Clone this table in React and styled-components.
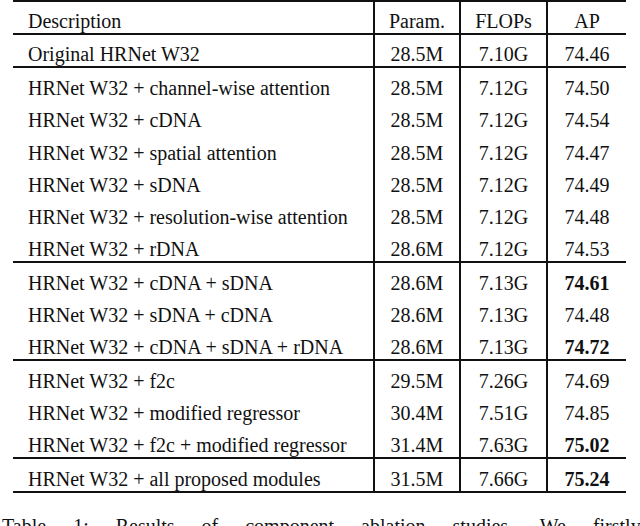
import React from "react";
import styled, { createGlobalStyle } from "styled-components";

const Global = createGlobalStyle`
  html, body { margin: 0; padding: 0; background: #fff; }
  body { font-family: "Liberation Serif", "Times New Roman", serif; color: #111; overflow: hidden; }
`;

const Page = styled.div`
  width: 640px;
  height: 526px;
  overflow: hidden;
  display: flex;
  flex-direction: column;
`;

const Table = styled.div`
  margin-left: 13px;
  width: 613px;
  border-top: 2px solid #111;
  border-bottom: 2px solid #111;
`;

const Group = styled.div`
  & + & { border-top: 2px solid #111; }
`;

const Row = styled.div`
  display: grid;
  grid-template-columns: 360px 86px 87px 80px;
  height: ${(p) => p.$h}px;
`;

const Cell = styled.div`
  display: flex;
  align-items: flex-end;
  justify-content: ${(p) => (p.$left ? "flex-start" : "center")};
  padding-left: ${(p) => (p.$left ? "15px" : "0")};
  border-left: ${(p) => (p.$left ? "none" : "2px solid #111")};
  font-size: 20px;
  line-height: 23px;
  font-weight: ${(p) => (p.$bold ? 700 : 400)};
  white-space: nowrap;
`;

const Caption = styled.div`
  margin-top: 22px;
  margin-left: 2px;
  font-size: 20px;
  line-height: 23px;
  white-space: nowrap;
  word-spacing: 22px;
`;

const groups = [
  { h: 31, rows: [["Description", "Param.", "FLOPs", "AP"]] },
  { h: 31, rows: [["Original HRNet W32", "28.5M", "7.10G", "74.46"]] },
  {
    h: 32.2,
    rows: [
      ["HRNet W32 + channel-wise attention", "28.5M", "7.12G", "74.50"],
      ["HRNet W32 + cDNA", "28.5M", "7.12G", "74.54"],
      ["HRNet W32 + spatial attention", "28.5M", "7.12G", "74.47"],
      ["HRNet W32 + sDNA", "28.5M", "7.12G", "74.49"],
      ["HRNet W32 + resolution-wise attention", "28.5M", "7.12G", "74.48"],
      ["HRNet W32 + rDNA", "28.6M", "7.12G", "74.53"],
    ],
  },
  {
    h: 31.8,
    rows: [
      ["HRNet W32 + cDNA + sDNA", "28.6M", "7.13G", "74.61", true],
      ["HRNet W32 + sDNA + cDNA", "28.6M", "7.13G", "74.48"],
      ["HRNet W32 + cDNA + sDNA + rDNA", "28.6M", "7.13G", "74.72", true],
    ],
  },
  {
    h: 32.2,
    rows: [
      ["HRNet W32 + f2c", "29.5M", "7.26G", "74.69"],
      ["HRNet W32 + modified regressor", "30.4M", "7.51G", "74.85"],
      ["HRNet W32 + f2c + modified regressor", "31.4M", "7.63G", "75.02", true],
    ],
  },
  {
    h: 32,
    rows: [["HRNet W32 + all proposed modules", "31.5M", "7.66G", "75.24", true]],
  },
];

export default function App() {
  return (
    <>
      <Global />
      <Page>
        <Table>
          {groups.map((g, gi) => (
            <Group key={gi}>
              {g.rows.map((r, ri) => (
                <Row key={ri} $h={g.h}>
                  <Cell $left>{r[0]}</Cell>
                  <Cell>{r[1]}</Cell>
                  <Cell>{r[2]}</Cell>
                  <Cell $bold={r[4]}>{r[3]}</Cell>
                </Row>
              ))}
            </Group>
          ))}
        </Table>
        <Caption>Table 1: Results of component ablation studies. We firstly</Caption>
      </Page>
    </>
  );
}
